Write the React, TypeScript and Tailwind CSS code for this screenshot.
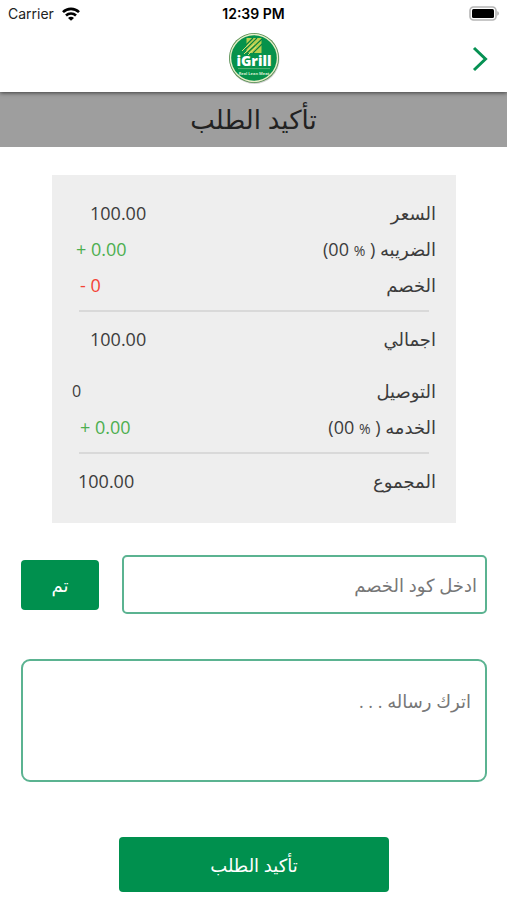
import clsx from "clsx";
import type { ReactNode } from "react";

type Line = {
  label: ReactNode;
  value: string;
  className?: string;
};

const percent = <span className="text-sm">%</span>;

const priceLines: Line[] = [
  { label: "السعر", value: "100.00", className: "pl-[38px]" },
  { label: <>الضريبه ( {percent} 00)</>, value: "+ 0.00", className: "pl-6 text-[#4caf50]" },
  { label: "الخصم", value: "- 0", className: "pl-7 text-[#f44336]" },
];

const feeLines: Line[] = [
  { label: "التوصيل", value: "0", className: "pl-5 text-base" },
  { label: <>الخدمه ( {percent} 00)</>, value: "+ 0.00", className: "pl-7 text-[#4caf50]" },
];

function SummaryRow({ label, value, className }: Line) {
  return (
    <div className="flex h-9 items-center justify-between pr-5">
      <dt>{label}</dt>
      <dd dir="ltr" className={clsx("whitespace-nowrap", className)}>
        {value}
      </dd>
    </div>
  );
}

function Divider() {
  return <div className="mx-[27px] mt-[7px] mb-[9px] h-0.5 bg-[#d9d9d9]" />;
}

function StatusBar() {
  return (
    <div dir="ltr" className="grid h-7 grid-cols-3 items-center px-2 font-['Inter',sans-serif] text-sm text-[#222]">
      <div className="flex items-center gap-2">
        <span>Carrier</span>
        <svg width="18" height="14" viewBox="0 0 18 14" fill="none" stroke="#000" strokeWidth="2.6">
          <path d="M1 5.2C5.4.7 12.6.7 17 5.2" />
          <path d="M4 8.5c2.8-2.7 7.2-2.7 10 0" />
          <path d="M9 13.8 6 10.9c1.7-1.5 4.3-1.5 6 0z" fill="#000" stroke="none" />
        </svg>
      </div>
      <span className="text-center font-semibold whitespace-nowrap text-black">12:39 PM</span>
      <svg className="justify-self-end" width="30" height="16" viewBox="0 0 30 16">
        <rect x="1" y="1" width="26" height="13" rx="3.5" fill="#fff" stroke="#b5b5b5" strokeWidth="1.6" />
        <rect x="3" y="3" width="22" height="9" rx="1.5" fill="#000" />
        <path d="M28.3 5.3c2 .6 2 3.8 0 4.4z" fill="#aaa" />
      </svg>
    </div>
  );
}

function Logo() {
  return (
    <svg dir="ltr" width="54" height="54" viewBox="0 0 54 54" role="img" aria-label="iGrill">
      <circle cx="27.5" cy="28" r="25" fill="#999" opacity=".45" />
      <circle cx="27" cy="27" r="25" fill="#4f8a4c" />
      <circle cx="27" cy="27" r="24.2" fill="#e8efc9" />
      <circle cx="27" cy="27" r="22.8" fill="#06924b" />
      <path d="M19.5 7h15v15h-15z" fill="#b9cf4e" />
      <g stroke="#06803f" strokeWidth="1.2" fill="none">
        <path d="m19 14 7-7M19 18 30 7M20 22 35 8M26 22l9-9" />
      </g>
      <path d="m15 20 8-8M17 23l10-10M21 24l8-8" stroke="#d8dd72" strokeWidth="1" />
      <text x="27" y="35" textAnchor="middle" fontFamily="Open Sans, sans-serif" fontSize="14" fontWeight="800" fill="#fff">
        iGrill
      </text>
      <path d="M11 37.6h32" stroke="#8dc78f" strokeWidth=".6" />
      <text x="27" y="44" textAnchor="middle" fontFamily="Open Sans, sans-serif" fontSize="4" fontWeight="700" fill="#d5ecd0">
        Real Lean Meat
      </text>
    </svg>
  );
}

export default function App() {
  return (
    <div
      dir="rtl"
      className="min-h-screen bg-white font-['Open_Sans','DejaVu_Sans',sans-serif] text-lg text-[#3c3c3c]"
    >
      <header className="relative h-[92px] bg-white shadow-[0_1px_4px_rgba(0,0,0,0.6)]">
        <StatusBar />
        <div className="grid h-[60px] grid-cols-3 items-center px-4">
          <button type="button" aria-label="رجوع" className="justify-self-start">
            <svg width="22" height="28" viewBox="0 0 22 28" fill="none" stroke="#069153" strokeWidth="3">
              <path d="m5 4 11.5 11L5 26" />
            </svg>
          </button>
          <div className="justify-self-center">
            <Logo />
          </div>
        </div>
      </header>

      <h1 className="flex h-[55px] items-center justify-center bg-[#9e9e9e] text-[26px] text-[#222]">
        تأكيد الطلب
      </h1>

      <main>
        <dl className="mr-[51px] ml-[52px] mt-7 bg-[#eee] pt-5 pb-6">
          {priceLines.map((line, i) => (
            <SummaryRow key={i} {...line} />
          ))}
          <Divider />
          <SummaryRow label="اجمالي" value="100.00" className="pl-[38px]" />
          <div className="mt-4">
            {feeLines.map((line, i) => (
              <SummaryRow key={i} {...line} />
            ))}
          </div>
          <Divider />
          <SummaryRow label="المجموع" value="100.00" className="pl-[26px]" />
        </dl>

        <form className="pr-5 pl-[21px]" onSubmit={(e) => e.preventDefault()}>
          <div className="mt-8 flex items-center gap-[23px]">
            <input
              type="text"
              aria-label="ادخل كود الخصم"
              placeholder="ادخل كود الخصم"
              className="h-[59px] min-w-0 flex-1 rounded-[5px] border-2 border-[#5bb391] px-2 placeholder:text-[#777]"
            />
            <button type="button" className="h-[50px] w-[78px] rounded bg-[#00904e] text-white">
              تم
            </button>
          </div>

          <textarea
            aria-label="اترك رساله"
            placeholder="اترك رساله . . ."
            className="mt-[45px] block h-[123px] w-full resize-none rounded-[9px] border-2 border-[#5bb391] px-3.5 py-[26px] placeholder:text-[#777]"
          />

          <button
            type="submit"
            className="mx-auto mt-[55px] block h-[55px] w-[270px] rounded bg-[#00904e] text-white"
          >
            تأكيد الطلب
          </button>
        </form>
      </main>
    </div>
  );
}
